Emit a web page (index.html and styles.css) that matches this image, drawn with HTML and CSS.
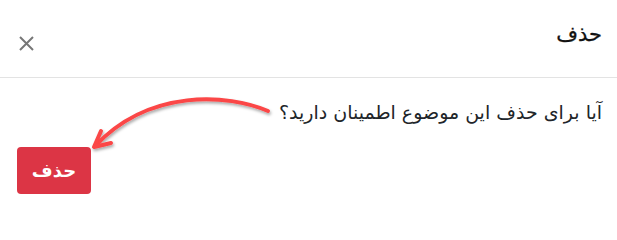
FILE: index.html
```html
<!DOCTYPE html>
<html lang="fa" dir="rtl">
<head>
<meta charset="utf-8">
<link rel="stylesheet" href="styles.css">
</head>
<body>
<div class="modal">
  <div class="modal-header">
    <h5 class="modal-title">حذف</h5>
    <button class="close" type="button" aria-label="Close">
      <svg width="15" height="15" viewBox="0 0 15 15"><path d="M1 1L14 14M14 1L1 14" stroke="#777" stroke-width="2" fill="none"/></svg>
    </button>
  </div>
  <div class="modal-body">
    <p class="question">آیا برای حذف این موضوع اطمینان دارید؟</p>
  </div>
  <div class="modal-footer">
    <button class="btn-danger" type="button">حذف</button>
  </div>
  <svg class="arrow" width="617" height="213" viewBox="0 0 617 213">
    <defs>
      <filter id="sh" x="-20%" y="-20%" width="140%" height="140%">
        <feDropShadow dx="1" dy="2" stdDeviation="1.5" flood-color="#000" flood-opacity="0.35"/>
      </filter>
    </defs>
    <g filter="url(#sh)" stroke="#fb4646" stroke-width="4" fill="none" stroke-linecap="round" stroke-linejoin="round">
      <path d="M268 111 C228 94 150 88 95 146"/>
      <path d="M101 131 L94 147 L111 143"/>
    </g>
  </svg>
</div>
</body>
</html>
```
FILE: styles.css
```css
html, body {
  margin: 0;
  padding: 0;
  background: #fff;
}
body {
  font-family: "DejaVu Sans", sans-serif;
  color: #212529;
}
.modal {
  position: relative;
  width: 617px;
  height: 213px;
  overflow: hidden;
}
.modal-header {
  display: flex;
  justify-content: space-between;
  align-items: flex-start;
  height: 78px;
  box-sizing: border-box;
  padding: 19px 15px 0 19px;
  border-bottom: 1px solid #e3e3e3;
}
.modal-title {
  margin: 0;
  font-size: 21px;
  font-weight: normal;
  line-height: 30px;
  color: #111;
  -webkit-text-stroke: 0.3px #111;
}
.close {
  margin: 17px 0 0 0;
  padding: 0;
  border: 0;
  background: none;
  width: 15px;
  height: 15px;
  display: flex;
}
.modal-body {
  padding: 20px 15px 0;
}
.question {
  margin: 0;
  font-size: 19px;
  line-height: 28px;
}
.modal-footer {
  display: flex;
  justify-content: flex-end;
  padding: 21px 17px 0;
}
.btn-danger {
  width: 74px;
  height: 47px;
  border: 0;
  border-radius: 4px;
  background: #dc3545;
  color: #fff;
  font-family: "DejaVu Sans", sans-serif;
  font-weight: bold;
  font-size: 18px;
  padding: 0;
}
.arrow {
  position: absolute;
  left: 0;
  top: 0;
  pointer-events: none;
}
```
